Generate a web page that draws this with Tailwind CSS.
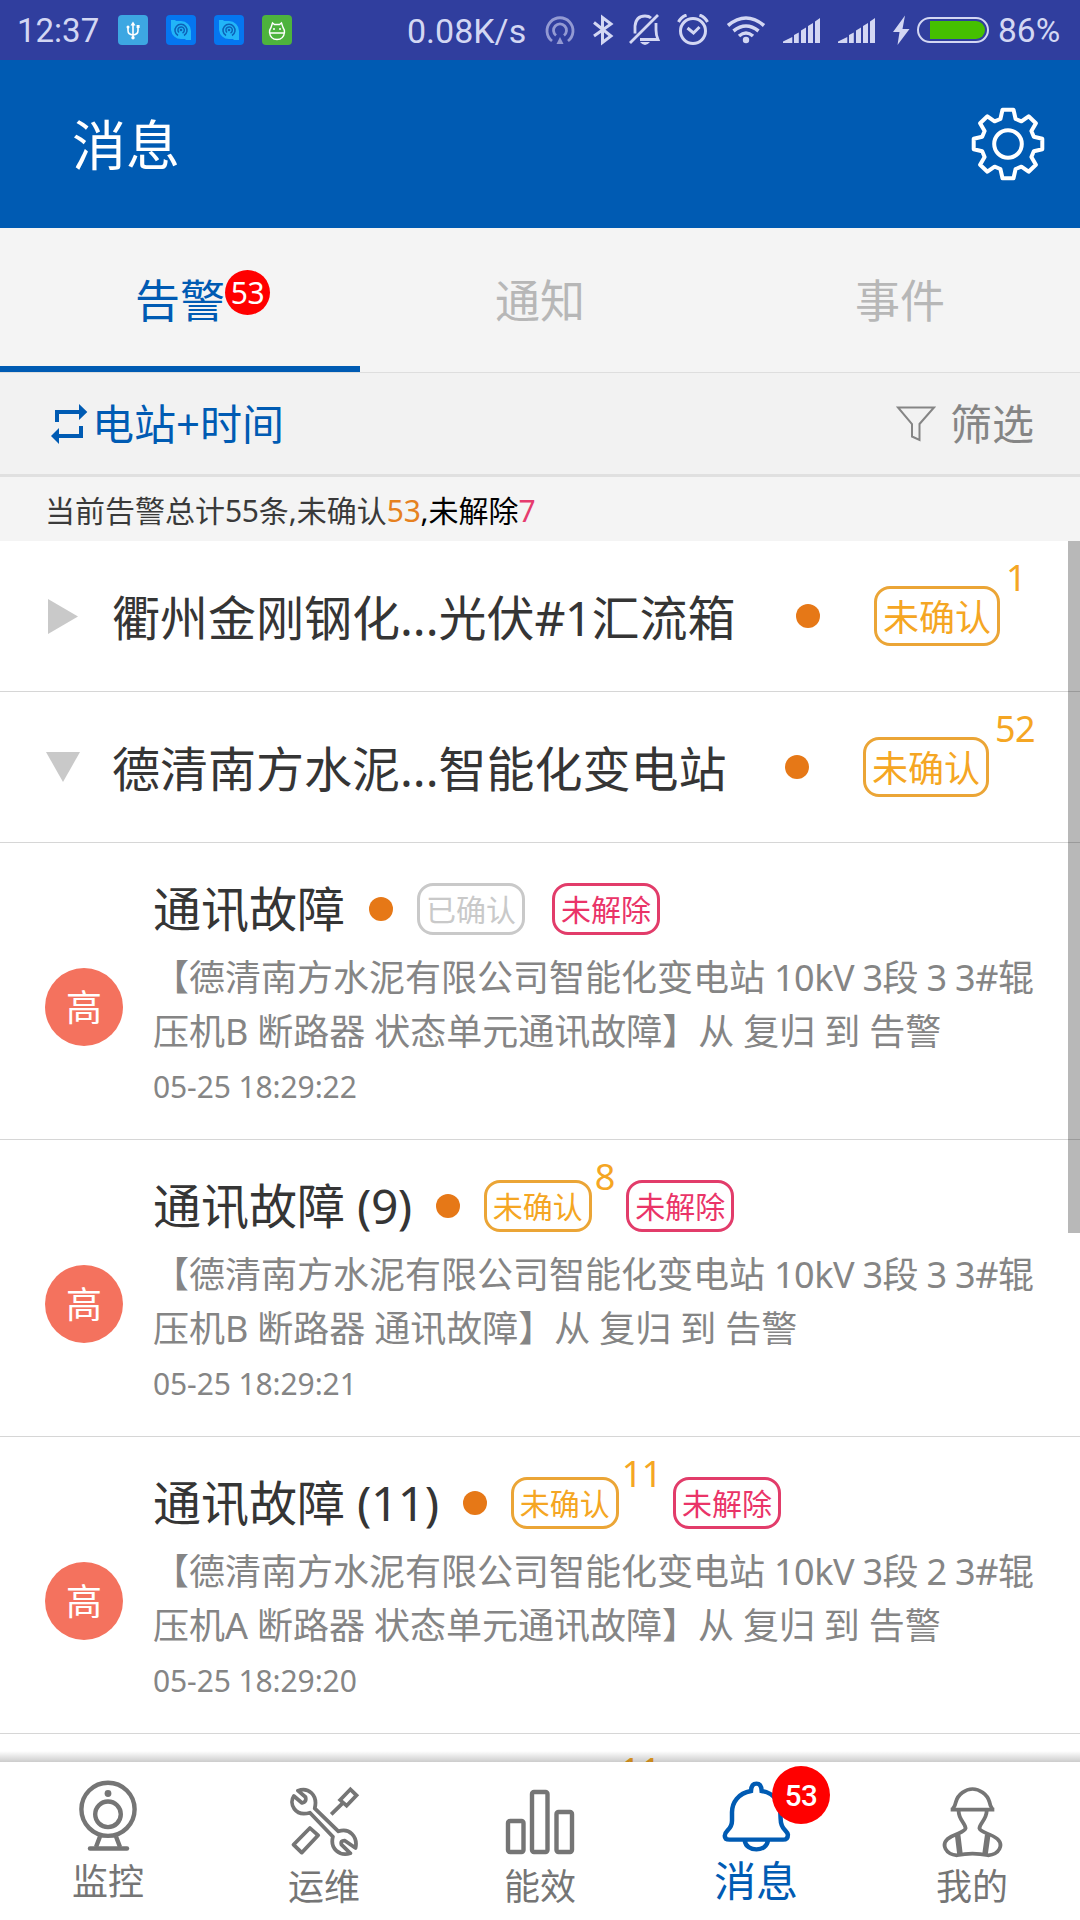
<!DOCTYPE html>
<html lang="zh-CN">
<head>
<meta charset="utf-8">
<title>消息</title>
<script src="https://cdn.jsdelivr.net/npm/@tailwindcss/browser@4"></script>
</head>
<body class="bg-white">
<div class="flex h-[1920px] w-[1080px] flex-col overflow-hidden whitespace-nowrap bg-white font-['Noto_Sans','Noto_Sans_CJK_SC',sans-serif] text-[#353535]">

  <!-- Status bar -->
  <div class="flex h-[60px] shrink-0 items-center bg-[#303e9e] pl-[17px] font-['Roboto',sans-serif] text-[33px] leading-[60px] text-[#d3d7f3]">
    <span class="w-[101px] pt-[1px]">12:37</span>
    <div class="flex gap-[18px]">
      <svg class="size-[30px]" viewBox="0 0 30 30"><rect width="30" height="30" rx="4" fill="#3da7e2"/><g fill="none" stroke="#fff" stroke-width="1.6"><path d="M15 9v15M10 13v2.500q0 4 5 4.500q5-.500 5-4.500V11.500"/></g><path d="M15 6.500l2.500 4h-5z" fill="#fff"/><circle cx="10" cy="12" r="1.500" fill="#fff"/><circle cx="15" cy="22.800" r="1.700" fill="#fff"/><rect x="18.600" y="10" width="3" height="3" fill="#fff"/></svg>
      <svg class="size-[30px]" viewBox="0 0 30 30"><rect width="30" height="30" rx="4" fill="#0576f0"/><path d="M5 5h4l1 1h5a10 10 0 0 1 10 10v9h-5l-1-1h-4A10 10 0 0 1 5 15z" fill="#22b5f8"/><path d="M12 20.500a6 6 0 1 1 6 0M13 17.500a3.200 3.200 0 1 1 3.500.500" fill="none" stroke="#0d62b8" stroke-width="1.500"/><circle cx="15" cy="15" r="1.300" fill="#0d62b8"/></svg>
      <svg class="size-[30px]" viewBox="0 0 30 30"><rect width="30" height="30" rx="4" fill="#0576f0"/><path d="M5 5h4l1 1h5a10 10 0 0 1 10 10v9h-5l-1-1h-4A10 10 0 0 1 5 15z" fill="#22b5f8"/><path d="M12 20.500a6 6 0 1 1 6 0M13 17.500a3.200 3.200 0 1 1 3.500.500" fill="none" stroke="#0d62b8" stroke-width="1.500"/><circle cx="15" cy="15" r="1.300" fill="#0d62b8"/></svg>
      <svg class="size-[30px]" viewBox="0 0 30 30"><rect width="30" height="30" rx="4" fill="#4db33d"/><g fill="none" stroke="#fff" stroke-width="1.400"><path d="M9 12.500l1.500-4.500 2 1.500h5l2-1.500 1.500 4.500q2 3 1.500 5q-1 7-7.500 7t-7.500-7q-.500-2 1.500-5zM7.500 18h15"/></g><circle cx="12" cy="14" r="1" fill="#fff"/><circle cx="18" cy="14" r="1" fill="#fff"/></svg>
    </div>
    <span class="ml-[115px] w-[137px] pt-[1px] text-[34px]">0.08K/s</span>
    <svg class="h-8 w-8" viewBox="544 14 32 32" fill="none" stroke="#939ad3" stroke-width="2.800"><path d="M552 41a13 13 0 1 1 16 0M556 35.500a6.500 6.500 0 1 1 8 0"/><path d="M556.500 44h7l-3.500-7z" fill="#939ad3" stroke="none"/></svg>
    <svg class="ml-4 h-8 w-[22px]" viewBox="592 14 22 32" fill="none" stroke="#d3d7f3" stroke-width="3"><path d="M594 22.500L611 36L602.500 42.500V17.500L611 24L594 36"/></svg>
    <svg class="ml-[14px] h-8 w-[34px]" viewBox="628 14 34 32" fill="none" stroke="#d3d7f3" stroke-width="2.800"><path d="M630 43L658 15M635 33.500V26q1-10 10-10q4 0 6 2M656 23v7q0 5 2 9.500h-18"/><path d="M640 42h10q-5 6-10 0z" fill="#d3d7f3" stroke="none"/></svg>
    <svg class="ml-[14px] h-8 w-[34px]" viewBox="676 14 34 32" fill="none" stroke="#d3d7f3" stroke-width="3"><circle cx="693" cy="31" r="12.500"/><path d="M687.500 28l6 5 6-6M678.500 22q2.500-5 8-7M707.500 22q-2.500-5-8-7"/></svg>
    <svg class="ml-[15px] h-8 w-[42px]" viewBox="725 14 42 32" fill="none" stroke="#d3d7f3" stroke-width="3.600"><path d="M728 25.500q18-15 36 0M733.500 31q12.500-10 25 0M739 36q7-6 14 0"/><circle cx="746" cy="40" r="3.200" fill="#d3d7f3" stroke="none"/></svg>
    <svg class="ml-4 h-8 w-[37px]" viewBox="783 14 37 32" fill="#d3d7f3"><path id="signal" d="M783 43v-1.500l9.300-4.500v6zM794 43V35l4.800-2.500V43zM801 43V30.500l5-3V43zM808 43V26l5-3V43zM815 43V21.500l5-3.500V43z"/></svg>
    <svg class="ml-[18px] h-8 w-[37px]" viewBox="783 14 37 32" fill="#d3d7f3"><use href="#signal"/></svg>
    <svg class="ml-[17px] h-8 w-[18px]" viewBox="892 14 18 32"><path d="M905 15.500L893 32h6.500L897.500 45L909.500 29h-7z" fill="#d3d7f3"/></svg>
    <svg class="ml-[6px] h-8 w-[74px]" viewBox="916 14 74 32"><rect x="918" y="18" width="70" height="24" rx="12" fill="none" stroke="#d3d7f3" stroke-width="2"/><path d="M930 21h46a9 9 0 0 1 0 18h-46z" fill="#45c000"/></svg>
    <span class="ml-[8px] pt-[1px] text-[33.500px]">86%</span>
  </div>

  <!-- Title bar -->
  <header class="flex h-[168px] shrink-0 items-center justify-between bg-[#005bb3] pl-[72px] pr-[35px] text-white">
    <h1 class="pt-[2px] text-[54px] leading-[72px]">消息</h1>
    <svg class="size-[74px]" viewBox="-37 -37 74 74" fill="none" stroke="#fff" stroke-width="4" stroke-linejoin="round"><path d="M-5.500-34.300H5.500L7.600-25L13.400-22.700L20.600-27.700L27.900-20.700L23.400-13L25.800-7.300L34.300-5.300V5.300L25.800 7.300L23.400 13L27.900 20.700L20.600 27.700L13.400 22.700L7.600 25L5.500 34.300H-5.500L-7.600 25L-13.400 22.700L-20.600 27.700L-27.900 20.700L-23.400 13L-25.800 7.300L-34.300 5.300V-5.300L-25.800-7.300L-23.400-13L-27.900-20.700L-20.600-27.700L-13.400-22.700L-7.600-25Z"/><circle r="13.800"/></svg>
  </header>

  <!-- Tabs -->
  <nav class="grid h-[145px] shrink-0 grid-cols-3 border-b border-[#dedede] bg-[#f4f4f4] text-center text-[45px] leading-[146px] text-[#b7b7b7]">
    <div class="h-[144px] border-b-[6px] border-[#005bb3] text-[#005bb3]">
      <span class="relative inline-block h-[138px]">告警<span class="absolute left-full top-[42px] size-[45px] rounded-full bg-[#ff0000] text-center text-[30px] leading-[45px] tracking-[-0.3px] text-white">53</span></span>
    </div>
    <div class="h-[144px]">通知</div>
    <div class="h-[144px]">事件</div>
  </nav>

  <!-- Sort and filter -->
  <div class="flex h-[104px] shrink-0 items-center justify-between border-b-[3px] border-[#e0e0e0] bg-[#f2f2f2] pl-[50px] pr-[46px] text-[42px] leading-[60px]">
    <div class="flex items-center gap-[4px] text-[#005bb3]">
      <svg class="h-[42px] w-[38px]" viewBox="50 403 38 42"><path d="M57 422V412H80M81 426V436H58" fill="none" stroke="#005bb3" stroke-width="4"/><path d="M79 404L87.300 412L79 420ZM59 428L51 436L59 444Z" fill="#005bb3"/></svg>
      <span>电站+时间</span>
    </div>
    <div class="flex items-center gap-[14px] text-[#858585]">
      <svg class="h-[38px] w-[41px]" viewBox="896 406 41 38"><path d="M899 408.500H935L920.500 425V441L913 437.500V425Z" fill="none" stroke="#858585" stroke-width="2"/></svg>
      <span>筛选</span>
    </div>
  </div>

  <p class="h-[64px] shrink-0 bg-[#f4f4f4] pl-[45px] text-[30px] leading-[67px] text-[#3a3a3a]">当前告警总计<span class="tracking-[-0.3px]">55</span>条,未确认<span class="tracking-[-0.3px] text-[#e6811f]">53</span><span class="text-black">,未解除</span><span class="text-[#e63c6e]">7</span></p>

  <!-- Alarm list -->
  <main class="relative h-[1221px] shrink-0 overflow-hidden">
    <section class="flex h-[151px] items-center border-b border-[#d6d6d6] pl-[46px]">
      <svg class="h-[35px] w-[34px]" viewBox="0 0 34 35"><path d="M2 0V35L32 17.500Z" fill="#c9c9c9"/></svg>
      <h2 class="ml-[32px] w-[684px] pt-[3px] text-[48px] leading-[64px]">衢州金刚钢化...光伏<span class="tracking-[-0.8px]">#1</span>汇流箱</h2>
      <i class="size-6 rounded-full bg-[#e67817]"></i>
      <span class="ml-[54px] h-[60px] w-[126px] rounded-2xl border-[3px] border-[#eba536] text-center text-[36px] leading-[58px] text-[#f5a623]">未确认</span>
      <span class="ml-[6px] mb-[76px] text-[36px] leading-10 text-[#f5a623]">1</span>
    </section>
    <section class="flex h-[151px] items-center border-b border-[#d6d6d6] pl-[46px]">
      <svg class="h-[30px] w-[34px]" viewBox="0 0 34 30"><path d="M0 0H34L17 30Z" fill="#c9c9c9"/></svg>
      <h2 class="ml-[32px] w-[673px] pt-[3px] text-[48px] leading-[64px]">德清南方水泥...智能化变电站</h2>
      <i class="size-6 rounded-full bg-[#e67817]"></i>
      <span class="ml-[54px] h-[60px] w-[126px] rounded-2xl border-[3px] border-[#eba536] text-center text-[36px] leading-[58px] text-[#f5a623]">未确认</span>
      <span class="ml-[6px] mb-[76px] text-[36px] leading-10 tracking-[-0.6px] text-[#f5a623]">52</span>
    </section>

    <article class="flex h-[297px] border-b border-[#d6d6d6] pl-[45px]">
      <span class="mt-[125px] size-[78px] rounded-full bg-[#f4725e] text-center text-[36px] leading-[80px] text-white">高</span>
      <div class="ml-[30px] pt-[30px]">
        <div class="flex h-[72px] items-center">
          <h3 class="text-[48px] leading-[72px]">通讯故障</h3>
          <i class="ml-[24px] size-6 rounded-full bg-[#e67817]"></i>
          <span class="ml-[24px] h-[52px] w-[108px] rounded-2xl border-[3px] border-[#c9c9c9] text-center text-[30px] leading-[48px] text-[#c9c9c9]">已确认</span>
          <span class="ml-[27px] h-[52px] w-[108px] rounded-2xl border-[3px] border-[#e23c6a] text-center text-[30px] leading-[48px] text-[#ea3468]">未解除</span>
        </div>
        <p class="mt-[6px] text-[36px] leading-[54px] [word-spacing:-0.4px] text-[#858585]">【德清南方水泥有限公司智能化变电站 <span class="tracking-[-0.5px]">10kV 3段 3 3#</span>辊<br>压机B 断路器 状态单元通讯故障】从 复归 到 告警</p>
        <time class="mt-[3px] block text-[30px] leading-[50px] tracking-[-0.1px] text-[#858585]">05-25 18:29:22</time>
      </div>
    </article>
    <article class="flex h-[297px] border-b border-[#d6d6d6] pl-[45px]">
      <span class="mt-[125px] size-[78px] rounded-full bg-[#f4725e] text-center text-[36px] leading-[80px] text-white">高</span>
      <div class="ml-[30px] pt-[30px]">
        <div class="flex h-[72px] items-center">
          <h3 class="text-[48px] leading-[72px]">通讯故障<span class="tracking-[-0.5px]"> (9)</span></h3>
          <i class="ml-[24px] size-6 rounded-full bg-[#e67817]"></i>
          <span class="ml-[24px] h-[52px] w-[108px] rounded-2xl border-[3px] border-[#eba536] text-center text-[30px] leading-[48px] text-[#f5a623]">未确认</span>
          <span class="mb-[59px] ml-[3px] text-[36px] leading-10 text-[#f5a623]">8</span>
          <span class="ml-[11px] h-[52px] w-[108px] rounded-2xl border-[3px] border-[#e23c6a] text-center text-[30px] leading-[48px] text-[#ea3468]">未解除</span>
        </div>
        <p class="mt-[6px] text-[36px] leading-[54px] [word-spacing:-0.4px] text-[#858585]">【德清南方水泥有限公司智能化变电站 <span class="tracking-[-0.5px]">10kV 3段 3 3#</span>辊<br>压机B 断路器 通讯故障】从 复归 到 告警</p>
        <time class="mt-[3px] block text-[30px] leading-[50px] tracking-[-0.1px] text-[#858585]">05-25 18:29:21</time>
      </div>
    </article>
    <article class="flex h-[297px] border-b border-[#d6d6d6] pl-[45px]">
      <span class="mt-[125px] size-[78px] rounded-full bg-[#f4725e] text-center text-[36px] leading-[80px] text-white">高</span>
      <div class="ml-[30px] pt-[30px]">
        <div class="flex h-[72px] items-center">
          <h3 class="text-[48px] leading-[72px]">通讯故障<span class="tracking-[-0.5px]"> (11)</span></h3>
          <i class="ml-[24px] size-6 rounded-full bg-[#e67817]"></i>
          <span class="ml-[24px] h-[52px] w-[108px] rounded-2xl border-[3px] border-[#eba536] text-center text-[30px] leading-[48px] text-[#f5a623]">未确认</span>
          <span class="mb-[59px] ml-[3px] text-[36px] leading-10 tracking-[-0.5px] text-[#f5a623]">11</span>
          <span class="ml-[11px] h-[52px] w-[108px] rounded-2xl border-[3px] border-[#e23c6a] text-center text-[30px] leading-[48px] text-[#ea3468]">未解除</span>
        </div>
        <p class="mt-[6px] text-[36px] leading-[54px] [word-spacing:-0.4px] text-[#858585]">【德清南方水泥有限公司智能化变电站 <span class="tracking-[-0.5px]">10kV 3段 2 3#</span>辊<br>压机A 断路器 状态单元通讯故障】从 复归 到 告警</p>
        <time class="mt-[3px] block text-[30px] leading-[50px] tracking-[-0.1px] text-[#858585]">05-25 18:29:20</time>
      </div>
    </article>
    <article class="flex h-[28px] overflow-hidden pl-[620px]">
      <span class="pt-[17px] text-[36px] leading-10 text-[#f5a623]">11</span>
    </article>

    <div class="absolute right-0 top-0 h-[692px] w-3 bg-black/28"></div>
    <div class="absolute inset-x-0 bottom-0 h-[11px] bg-linear-to-t from-black/20 to-transparent"></div>
  </main>

  <!-- Bottom navigation -->
  <footer class="grid h-[158px] shrink-0 grid-cols-5 bg-white text-center text-[36px] leading-[54px] text-[#757575]">
    <div class="flex flex-col items-center pt-[18px]">
      <svg class="h-[74px] w-[60px]" viewBox="78 1780 60 74" fill="none" stroke="#757575" stroke-width="4.400"><circle cx="108" cy="1809.300" r="26.600"/><circle cx="108" cy="1814.300" r="12.800"/><circle cx="108" cy="1793.500" r="3.400" fill="#757575" stroke="none"/><path d="M100 1836.500L96 1847M116 1836.500L120 1847"/><path d="M90 1848.500H127" stroke-linecap="round"/></svg>
      <span class="mt-[1px]">监控</span>
    </div>
    <div class="flex flex-col items-center pt-[24px]">
      <svg class="size-[72px]" viewBox="836 138 210 216" preserveAspectRatio="none" fill="none" stroke="#757575" stroke-width="11" stroke-linejoin="round"><path d="M865 152L887 171Q891 186 877 189L853 168C838 190 856 232 900 218L967 290C958 325 985 350 1018 340L992 314Q988 301 1002 302L1033 324C1040 290 1015 262 983 274L914 205C924 165 895 140 865 152Z"/><path d="M900 264L924 286L876 338L852 314Z"/><path d="M962 223L997 188M988 180L1018 148L1036 166L1007 197Z" stroke-linejoin="miter"/></svg>
      <span class="mt-[2px]">运维</span>
    </div>
    <div class="flex flex-col items-center pt-[24px]">
      <svg class="h-[72px] w-[70px]" viewBox="505 1786 70 72" fill="none" stroke="#757575" stroke-width="4.400"><rect x="508" y="1821" width="15.500" height="31" rx="2"/><rect x="532" y="1792" width="15.500" height="60" rx="2"/><rect x="556.500" y="1812" width="15.500" height="40" rx="2"/></svg>
      <span class="mt-[2px]">能效</span>
    </div>
    <div class="relative flex flex-col items-center pt-[18px] text-[42px] text-[#005bb3]">
      <svg class="h-[72px] w-[69px]" viewBox="528 118 200 216" preserveAspectRatio="none" fill="none" stroke="#005bb3" stroke-width="13"><path d="M612 151C575 158 557 185 557 215V240C557 268 536 268 536 285Q536 297 550 297H705Q719 297 719 282C717 268 698 268 698 235C698 190 685 158 643 151Q642 129 628 129Q613 129 612 151ZM594 300C598 335 658 335 661 300"/><path d="M628 142V158" stroke="#fff" stroke-width="8" stroke-linecap="round"/></svg>
      <span class="mt-[2px]">消息</span>
      <b class="absolute left-[124px] top-[4px] size-[58px] rounded-full bg-[#ff0000] font-['Roboto',sans-serif] text-[29.500px] font-medium leading-[61px] tracking-[-0.5px] text-white">53</b>
    </div>
    <div class="flex flex-col items-center pt-[24px]">
      <svg class="h-[72px] w-[61px]" viewBox="1166 138 176 216" preserveAspectRatio="none" fill="none" stroke="#757575" stroke-width="11"><path d="M1197 207Q1204 198 1206 186C1212 162 1235 147 1254 147S1297 162 1303 186Q1305 198 1311 207"/><path d="M1191 209H1317"/><path d="M1214 213C1214 240 1234 250 1234 265C1230 280 1205 278 1182 297C1164 315 1176 343 1209 346Q1254 336 1299 346C1332 343 1344 315 1326 297C1305 278 1278 280 1274 265C1274 250 1294 240 1295 213"/><path d="M1211 284L1218 344M1298 284L1290 344" stroke-width="16"/></svg>
      <span class="mt-[2px]">我的</span>
    </div>
  </footer>
</div>
</body>
</html>
